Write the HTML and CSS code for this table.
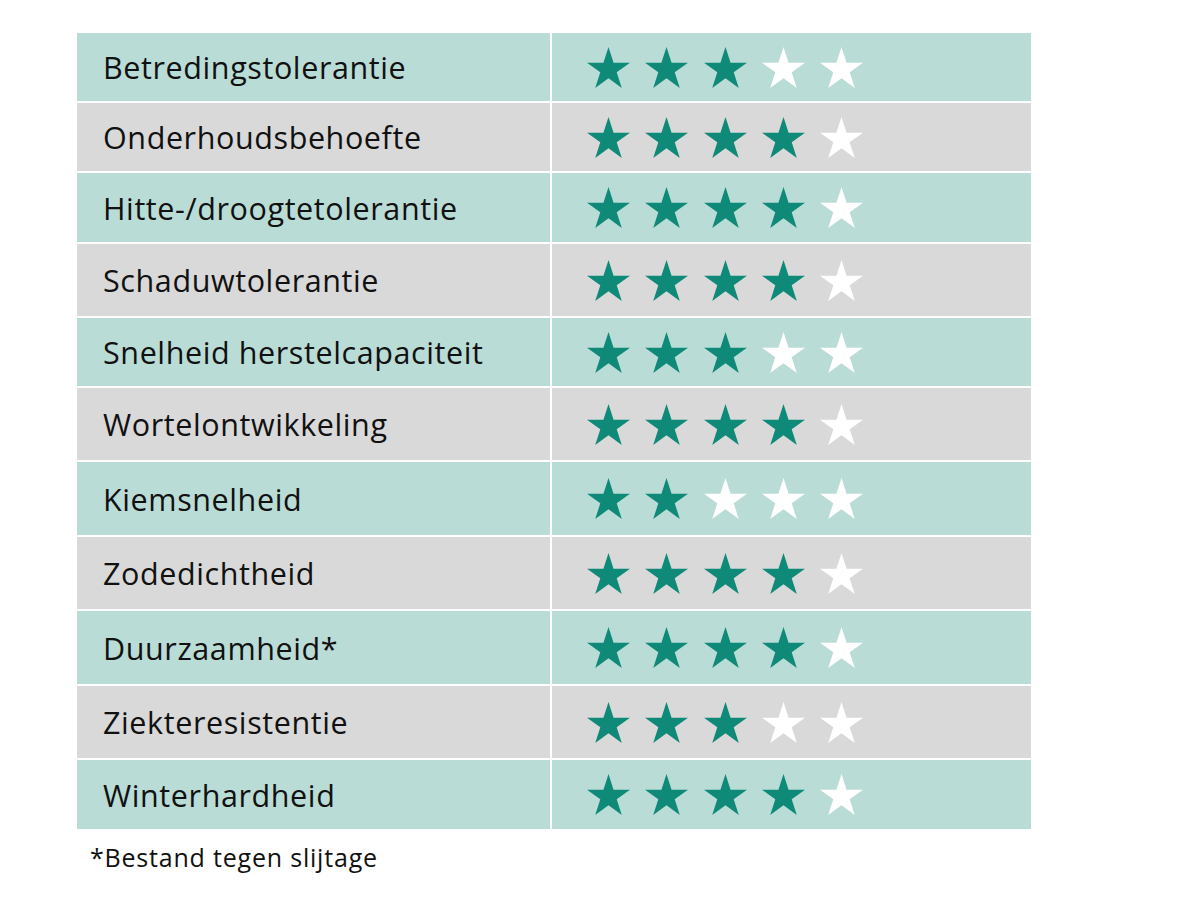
FILE: index.html
```html
<!DOCTYPE html>
<html lang="nl">
<head>
<meta charset="utf-8">
<title>Eigenschappen</title>
<link rel="stylesheet" href="styles.css">
</head>
<body>
<svg width="0" height="0" class="defs" aria-hidden="true">
  <symbol id="star" viewBox="-95.11 -100 190.22 180.9">
    <polygon points="0,-100 22.45,-30.9 95.11,-30.9 36.33,11.8 58.78,80.9 0,38.2 -58.78,80.9 -36.33,11.8 -95.11,-30.9 -22.45,-30.9"/>
  </symbol>
</svg>
<main class="page">
  <div class="table">
    <div class="row teal h68"><div class="label">Betredingstolerantie</div><div class="stars"><svg class="s on"><use href="#star"/></svg><svg class="s on"><use href="#star"/></svg><svg class="s on"><use href="#star"/></svg><svg class="s off"><use href="#star"/></svg><svg class="s off"><use href="#star"/></svg></div></div>
    <div class="row gray h68"><div class="label">Onderhoudsbehoefte</div><div class="stars"><svg class="s on"><use href="#star"/></svg><svg class="s on"><use href="#star"/></svg><svg class="s on"><use href="#star"/></svg><svg class="s on"><use href="#star"/></svg><svg class="s off"><use href="#star"/></svg></div></div>
    <div class="row teal h69"><div class="label">Hitte-/droogtetolerantie</div><div class="stars"><svg class="s on"><use href="#star"/></svg><svg class="s on"><use href="#star"/></svg><svg class="s on"><use href="#star"/></svg><svg class="s on"><use href="#star"/></svg><svg class="s off"><use href="#star"/></svg></div></div>
    <div class="row gray h72"><div class="label">Schaduwtolerantie</div><div class="stars"><svg class="s on"><use href="#star"/></svg><svg class="s on"><use href="#star"/></svg><svg class="s on"><use href="#star"/></svg><svg class="s on"><use href="#star"/></svg><svg class="s off"><use href="#star"/></svg></div></div>
    <div class="row teal h68"><div class="label">Snelheid herstelcapaciteit</div><div class="stars"><svg class="s on"><use href="#star"/></svg><svg class="s on"><use href="#star"/></svg><svg class="s on"><use href="#star"/></svg><svg class="s off"><use href="#star"/></svg><svg class="s off"><use href="#star"/></svg></div></div>
    <div class="row gray h72"><div class="label">Wortelontwikkeling</div><div class="stars"><svg class="s on"><use href="#star"/></svg><svg class="s on"><use href="#star"/></svg><svg class="s on"><use href="#star"/></svg><svg class="s on"><use href="#star"/></svg><svg class="s off"><use href="#star"/></svg></div></div>
    <div class="row teal h73"><div class="label">Kiemsnelheid</div><div class="stars"><svg class="s on"><use href="#star"/></svg><svg class="s on"><use href="#star"/></svg><svg class="s off"><use href="#star"/></svg><svg class="s off"><use href="#star"/></svg><svg class="s off"><use href="#star"/></svg></div></div>
    <div class="row gray h72"><div class="label">Zodedichtheid</div><div class="stars"><svg class="s on"><use href="#star"/></svg><svg class="s on"><use href="#star"/></svg><svg class="s on"><use href="#star"/></svg><svg class="s on"><use href="#star"/></svg><svg class="s off"><use href="#star"/></svg></div></div>
    <div class="row teal h73"><div class="label">Duurzaamheid*</div><div class="stars"><svg class="s on"><use href="#star"/></svg><svg class="s on"><use href="#star"/></svg><svg class="s on"><use href="#star"/></svg><svg class="s on"><use href="#star"/></svg><svg class="s off"><use href="#star"/></svg></div></div>
    <div class="row gray h72"><div class="label">Ziekteresistentie</div><div class="stars"><svg class="s on"><use href="#star"/></svg><svg class="s on"><use href="#star"/></svg><svg class="s on"><use href="#star"/></svg><svg class="s off"><use href="#star"/></svg><svg class="s off"><use href="#star"/></svg></div></div>
    <div class="row teal h69"><div class="label">Winterhardheid</div><div class="stars"><svg class="s on"><use href="#star"/></svg><svg class="s on"><use href="#star"/></svg><svg class="s on"><use href="#star"/></svg><svg class="s on"><use href="#star"/></svg><svg class="s off"><use href="#star"/></svg></div></div>
  </div>
  <p class="note">*Bestand tegen slijtage</p>
</main>
</body>
</html>
```

FILE: styles.css
```css
html, body {
  margin: 0;
  padding: 0;
  background: #ffffff;
}
body {
  font-family: "Open Sans", "Liberation Sans", sans-serif;
  color: #111111;
}
.defs {
  position: absolute;
  width: 0;
  height: 0;
}
.page {
  padding: 33px 0 0 77px;
  width: 954px;
}
.table {
  display: flex;
  flex-direction: column;
  gap: 2px;
}
.row {
  display: grid;
  grid-template-columns: 473px 479px;
  column-gap: 2px;
}
.h68 { height: 68px; }
.h69 { height: 69px; }
.h72 { height: 72px; }
.h73 { height: 73px; }
.row > div {
  display: flex;
  align-items: center;
}
.teal > div { background: #badcd6; }
.gray > div { background: #d9d9d9; }
.label {
  padding-left: 26px;
  font-size: 30.5px;
  letter-spacing: 0.6px;
}
.stars {
  padding-left: 35px;
  gap: 15.3px;
}
.s {
  width: 43px;
  height: 41px;
  display: block;
}
.s.on { fill: #0f8a79; }
.s.off { fill: #ffffff; }
.note {
  margin: 11px 0 0 13px;
  font-size: 25px;
  letter-spacing: 0.8px;
  line-height: 34px;
}
```
